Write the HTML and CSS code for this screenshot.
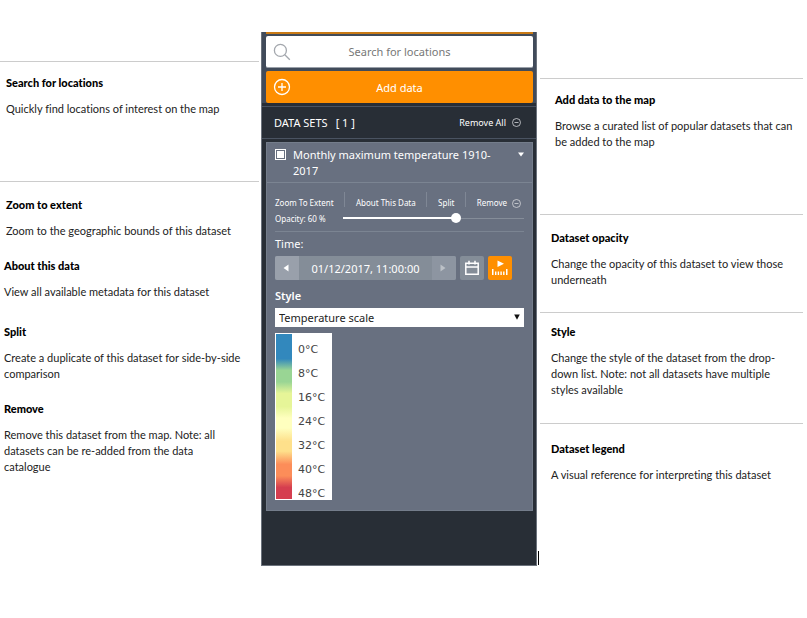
FILE: index.html
```html
<!DOCTYPE html>
<html lang="en">
<head>
<meta charset="utf-8">
<title>Data panel guide</title>
<link rel="stylesheet" href="styles.css">
</head>
<body>
<main class="guide">
  <div class="notes notes-left">
    <section class="group">
      <article class="note note-indent">
        <h2>Search for locations</h2>
        <p>Quickly find locations of interest on the map</p>
      </article>
    </section>
    <section class="group group-tall">
      <article class="note note-indent">
        <h2>Zoom to extent</h2>
        <p>Zoom to the geographic bounds of this dataset</p>
      </article>
      <article class="note">
        <h2>About this data</h2>
        <p>View all available metadata for this dataset</p>
      </article>
      <article class="note note-apart">
        <h2>Split</h2>
        <p>Create a duplicate of this dataset for side-by-side comparison</p>
      </article>
      <article class="note note-narrow">
        <h2>Remove</h2>
        <p>Remove this dataset from the map. Note: all datasets can be re-added from the data catalogue</p>
      </article>
    </section>
  </div>

  <div class="panel">
    <div class="panel-top">
      <label class="search">
        <svg class="icon-lg" viewBox="0 0 18 18" fill="none" stroke="#a3a7ad" stroke-width="1.3"><circle cx="7.4" cy="7.4" r="6"/><path d="M11.8 11.8l5 5"/></svg>
        <input type="text" placeholder="Search for locations" aria-label="Search for locations">
      </label>
      <button class="add" type="button">
        <svg class="icon-lg" viewBox="0 0 18 18" fill="none" stroke="#fff" stroke-width="1.3"><circle cx="9" cy="9" r="7.5"/><path d="M9 5v8M5 9h8"/></svg>
        <span>Add data</span>
      </button>
    </div>
    <header class="sets">
      <span class="sets-title">DATA SETS</span><span class="sets-count">[ 1 ]</span>
      <button class="plain remove-all" type="button">Remove All
        <svg class="icon-sm" viewBox="0 0 9 9" fill="none" stroke="#d5d8dc" stroke-width=".8"><circle cx="4.5" cy="4.5" r="4"/><path d="M2.5 4.5h4"/></svg>
      </button>
    </header>
    <section class="card">
      <div class="card-head">
        <input class="tick" type="checkbox" id="layer" checked>
        <label for="layer">Monthly maximum temperature 1910-<wbr>2017</label>
        <button class="plain" type="button" aria-label="Collapse"><svg class="fold" viewBox="0 0 8 5"><path d="M1 .5h6L4 4.5z" fill="#fff"/></svg></button>
      </div>
      <div class="card-body">
        <div class="actions">
          <button class="plain" type="button">Zoom To Extent</button>
          <button class="plain" type="button">About This Data</button>
          <button class="plain" type="button">Split</button>
          <button class="plain" type="button">Remove
            <svg class="icon-sm" viewBox="0 0 9 9" fill="none" stroke="#d5d8dc" stroke-width=".8"><circle cx="4.5" cy="4.5" r="4"/><path d="M2.5 4.5h4"/></svg>
          </button>
        </div>
        <div class="opacity">
          <label for="opacity">Opacity: 60 %</label>
          <input type="range" id="opacity" min="0" max="100" value="63">
        </div>
        <div class="label">Time:</div>
        <div class="time">
          <div class="stepper">
            <button type="button" aria-label="Previous"><svg class="arrow" viewBox="0 0 6 8"><path d="M5.5 .5v7L.5 4z" fill="#fff"/></svg></button>
            <button class="date" type="button">01/12/2017, 11:00:00</button>
            <button type="button" aria-label="Next"><svg class="arrow" viewBox="0 0 6 8"><path d="M.5 .5v7l5-3.500z" fill="#bcc1c7"/></svg></button>
          </div>
          <button class="square" type="button" aria-label="Calendar"><svg viewBox="0 0 24 24" fill="none" stroke="#fff" stroke-width="1.5"><path d="M5.800 7.200h12.400v11H5.800zM5.800 11h12.400M9 4.800v3.600M15 4.800v3.600"/></svg></button>
          <button class="square play" type="button" aria-label="Timeline"><svg viewBox="0 0 24 24" fill="#fff"><path d="M9.500 4.500l6.500 3.300-6.500 3.300zM4 13h1.500v6H4zM7 15.500h1.400V19H7zM9.700 15.500h1.400V19H9.700zM12.400 15.500h1.400V19h-1.400zM15.100 15.500h1.400V19h-1.400zM18 13h1.500v6H18z"/></svg></button>
        </div>
        <label class="label label-strong" for="style">Style</label>
        <div class="picker">
          <select id="style"><option>Temperature scale</option></select>
          <svg viewBox="0 0 6 6"><path d="M.2 .5h5.600L3 5.800z" fill="#111"/></svg>
        </div>
        <div class="legend">
          <div class="ramp"></div>
          <ul><li>0°C</li><li>8°C</li><li>16°C</li><li>24°C</li><li>32°C</li><li>40°C</li><li>48°C</li></ul>
        </div>
      </div>
    </section>
    <span class="cursor"></span>
  </div>

  <div class="notes notes-right">
    <section class="group group-add">
      <article class="note note-indent">
        <h2>Add data to the map</h2>
        <p>Browse a curated list of popular datasets that can be added to the map</p>
      </article>
    </section>
    <section class="group group-opacity">
      <article class="note">
        <h2>Dataset opacity</h2>
        <p>Change the opacity of this dataset to view those underneath</p>
      </article>
    </section>
    <section class="group group-style">
      <article class="note">
        <h2>Style</h2>
        <p>Change the style of the dataset from the drop-down list. Note: not all datasets have multiple styles available</p>
      </article>
    </section>
    <section class="group group-legend">
      <article class="note">
        <h2>Dataset legend</h2>
        <p>A visual reference for interpreting this dataset</p>
      </article>
    </section>
  </div>
</main>
</body>
</html>
```
FILE: styles.css
```css
* { box-sizing: border-box; }
body { margin: 0; background: #fff; }
h2, p, ul { margin: 0; padding: 0; }
svg { display: block; }
button { cursor: pointer; }

.guide {
  display: grid;
  grid-template-columns: minmax(0, 261fr) 276px minmax(0, 270fr);
  align-items: start;
}

/* Annotations */
.notes {
  font-family: Lato, "Liberation Sans", sans-serif;
  font-size: 11px;
  line-height: 16px;
  font-variant-ligatures: none;
  color: #222;
}
.notes h2 { margin-bottom: 10px; font-size: 11px; line-height: 16px; font-weight: 900; color: #000; }
.notes-left { padding: 61px 2px 0 0; }
.notes-right { padding: 78px 4px 0 3px; }
.group { border-top: 1px solid #ccc; padding-top: 13px; }
.group-tall { margin-top: 64px; padding-top: 15px; }
.note { padding: 0 12px 0 4px; }
.note-indent { padding-left: 6px; }
.note-narrow { padding-right: 28px; }
.note + .note { margin-top: 19px; }
.note + .note-apart { margin-top: 24px; }
.notes-right .note { padding: 0 4px 0 11px; }
.notes-right .note-indent { padding: 0 0 0 15px; }
.group-opacity { margin-top: 64px; padding-top: 15px; }
.group-style { margin-top: 24px; padding-top: 11px; }
.group-legend { margin-top: 25px; padding-top: 17px; }

/* Panel */
.panel {
  position: relative;
  margin-top: 32px;
  padding-bottom: 54px;
  border: 1px solid #6b727c;
  border-top: 0;
  background: #282e36;
  color: #fff;
  font-family: "Noto Sans", "Open Sans", sans-serif;
  font-size: 11px;
}
.panel button, .panel input, .panel select { font-family: inherit; }
.panel-top { padding: 0 3px 0 4px; background: #414b5a; }
.panel-top::before { content: ""; display: block; height: 2px; margin-bottom: 2px; background: #c97a16; }
.search, .add {
  display: flex;
  align-items: center;
  width: 100%;
  height: 32px;
  padding: 0 7px;
  border: 0;
  border-radius: 2px;
}
.search { margin-bottom: 3px; background: #fff; border-bottom: 1px solid #9aa0a9; }
.search input {
  flex: 1;
  min-width: 0;
  padding: 0 18px 0 0;
  border: 0;
  background: none;
  text-align: center;
  font-size: 11px;
}
.search input::placeholder { color: #777; opacity: 1; }
.add { background: #ff8f00; color: #fff; font-size: 11px; }
.add span { flex: 1; padding-right: 18px; }
.icon-lg { flex: none; width: 18px; height: 18px; }
.icon-sm { width: 9px; height: 9px; }
.plain {
  display: flex;
  align-items: center;
  gap: 5px;
  padding: 0;
  border: 0;
  background: none;
  color: #fff;
  font-size: 8px;
  line-height: 12px;
  white-space: nowrap;
}
.sets {
  display: flex;
  align-items: center;
  height: 33px;
  margin-top: 3px;
  padding: 0 15px 0 12px;
  border-top: 1px solid #4a5361;
  border-bottom: 1px solid #4a5361;
}
.sets-count { margin-left: 8px; }
.remove-all { margin-left: auto; font-size: 9px; gap: 6px; }

.card { margin: 3px 3px 0 4px; border: 1px solid #747d8b; background: #687080; }
.card-head {
  display: flex;
  align-items: flex-start;
  padding: 4px 7px 3px 8px;
  border-bottom: 1px solid #7b8492;
  line-height: 16px;
}
.card-head label { flex: 1; margin-left: 7px; padding-right: 16px; }
.tick {
  appearance: none;
  flex: none;
  width: 11px;
  height: 11px;
  margin: 2px 0 0;
  border: 1px solid #fff;
  background: #fff;
  box-shadow: inset 0 0 0 1px #687080;
}
.fold { width: 8px; height: 5px; margin-top: 5px; }
.card-body { padding: 7px 8px 10px; }
.actions { display: flex; align-items: flex-start; justify-content: space-between; height: 21px; }
.actions .plain { height: 24px; padding: 2px 3px 0 0; }
.actions .plain + .plain::before { content: ""; width: 1px; height: 15px; margin: 0 6px 8px 0; background: #7f8795; }
.opacity {
  display: flex;
  align-items: center;
  gap: 17px;
  height: 21px;
  border-bottom: 1px solid #7b8492;
  font-size: 8px;
}
.opacity label { flex: none; margin-top: -6px; }
.opacity input {
  appearance: none;
  flex: 1;
  min-width: 0;
  height: 10px;
  margin: -6px 0 0;
  background: linear-gradient(#fff, #fff) 0 50% / 62% 2px no-repeat, linear-gradient(#858d99, #858d99) 0 50% / 100% 1px no-repeat;
}
.opacity input::-webkit-slider-thumb { appearance: none; width: 10px; height: 10px; border-radius: 50%; background: #fff; }
.label { display: block; height: 16px; margin: 4px 0; line-height: 16px; }
.time { display: flex; gap: 4px; height: 24px; }
.stepper { display: flex; width: 181px; border-radius: 2px; overflow: hidden; background: #848d98; }
.stepper button { width: 24px; padding: 0 8px; border: 0; background: #99a0ab; }
.stepper button:last-child { background: #8d95a1; }
.stepper .date { flex: 1; padding: 0; background: #848d98; color: #fff; font-size: 11px; }
.arrow { width: 6px; height: 8px; }
.square { width: 24px; height: 24px; padding: 0; border: 0; border-radius: 2px; background: #848d98; }
.play { background: #ff8f00; }
.label-strong { margin: 8px 0 4px; font-weight: 600; }
.picker { position: relative; }
.picker select {
  display: block;
  appearance: none;
  width: 100%;
  height: 19px;
  padding: 0 4px;
  border: 0;
  border-radius: 0;
  background: #fff;
  color: #222;
  font-size: 11px;
}
.picker svg { position: absolute; right: 4px; top: 6px; width: 6px; height: 6px; pointer-events: none; }
.legend { display: flex; width: 57px; height: 167px; margin-top: 6px; padding: 1px; background: #fff; }
.ramp {
  width: 16px;
  background: linear-gradient(#3288bd 0 15%, #99d594 22% 29%, #e6f598 36% 44%, #ffffbf 51% 57%, #fee08b 65% 71%, #fc8d59 79% 86%, #d53e4f 93%);
}
.legend ul {
  display: grid;
  grid-auto-rows: 24px;
  align-content: end;
  margin: 0 0 -7px 6px;
  list-style: none;
  color: #444;
  font-family: "DejaVu Sans", sans-serif;
  font-size: 11px;
  line-height: 24px;
}
.cursor { position: absolute; right: -3px; bottom: 0; width: 1px; height: 14px; background: #000; }
```
